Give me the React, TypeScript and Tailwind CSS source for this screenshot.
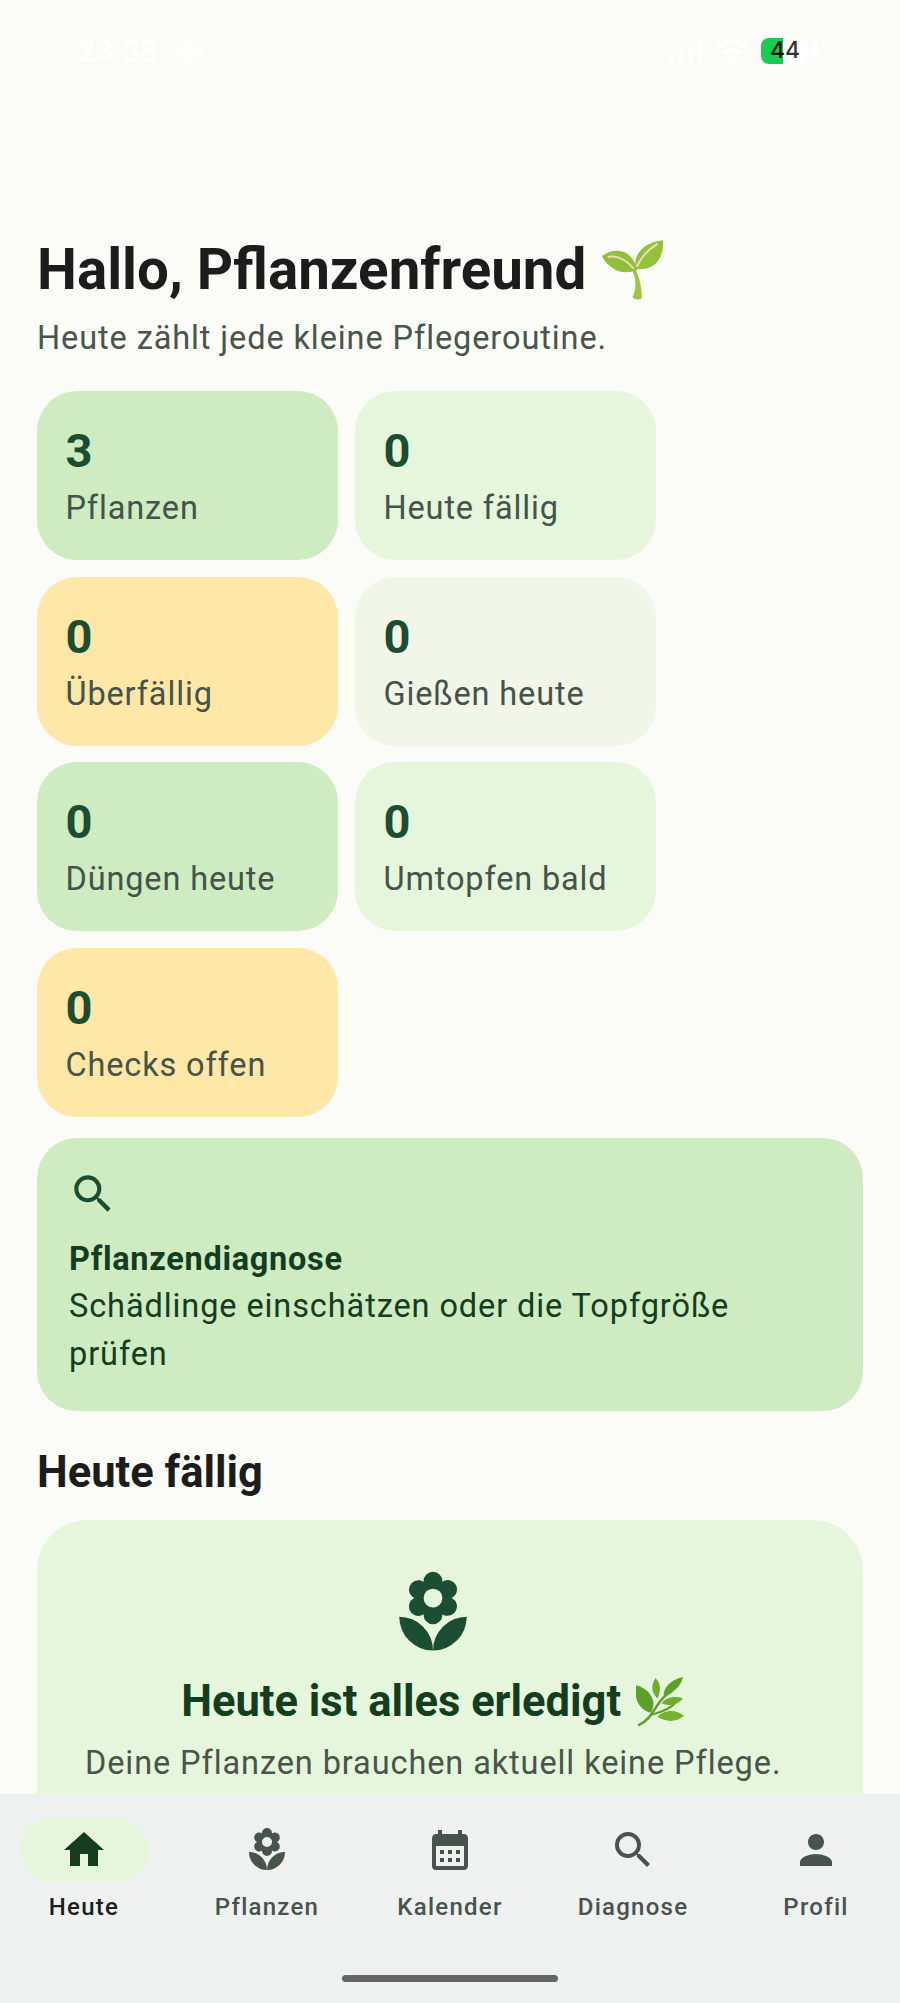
import React from "react";
import { MdCalendarMonth, MdHome, MdLocalFlorist, MdPerson, MdSearch } from "react-icons/md";

function Seedling() {
  return (
    <svg viewBox="0 0 184 180" className="w-[61px] h-[60px] shrink-0" aria-hidden>
      <path d="M98 80 C112 110 120 140 120 172 C120 180 100 182 92 172 C104 150 104 115 90 88 Z" fill="#9CC43C" />
      <path d="M0 48 C25 28 60 26 80 44 C95 57 103 75 106 90 C85 98 62 100 42 90 C22 80 8 66 0 48 Z" fill="#8FC03A" />
      <path d="M184 0 C186 30 178 62 152 78 C135 88 118 90 102 86 C96 62 106 36 128 20 C145 8 165 2 184 0 Z" fill="#92C23C" />
      <path d="M20 50 C48 46 74 60 94 84" stroke="#E8DFAA" strokeWidth="6" fill="none" strokeLinecap="round" />
      <path d="M166 12 C140 28 118 52 106 78" stroke="#E8DFAA" strokeWidth="6" fill="none" strokeLinecap="round" />
    </svg>
  );
}

function Herb() {
  return (
    <svg viewBox="12 6 49 50" className="w-[50px] h-[51px] shrink-0" aria-hidden>
      <path d="M16 54 C24 50 28 44 33 36 C38 28 42 24 48 21" stroke="#5F9E28" strokeWidth="2.5" fill="none" strokeLinecap="round" />
      <path d="M28 44 C36 42 46 39 52 32" stroke="#5F9E28" strokeWidth="2" fill="none" />
      <path d="M13 15 C22 17 29 24 30 32 C30 37 29 40 27 42 C20 40 14 34 13 26 Z" fill="#5BA125" />
      <path d="M32 8 C37 13 38 20 34 28 C30 24 26 18 32 8 Z" fill="#6EAD2B" />
      <path d="M59 7 C57 16 50 23 40 25 C40 17 47 10 59 7 Z" fill="#5BA125" />
      <path d="M59 28 C54 34 46 36 38 33 C42 27 50 25 59 28 Z" fill="#6EAD2B" />
      <path d="M60 45 C52 52 42 51 34 46 C40 39 52 38 60 45 Z" fill="#74B32F" />
    </svg>
  );
}

function StatusBar() {
  return (
    <div className="h-[100px] shrink-0 flex items-center justify-between pl-[78px] pr-[78px] pt-[1px]">
      <div className="flex items-center gap-[17px] text-white">
        <span className="text-[28px] font-semibold leading-none font-['Inter',sans-serif]">23:38</span>
        <svg viewBox="0 0 28 28" className="w-[28px] h-[28px]" fill="none" stroke="#fff" strokeWidth="2">
          <path d="M14 1 L27 14 L14 27 L1 14 Z" strokeLinejoin="round" />
          <path d="M14 7 L21 14 L14 21 L7 14 Z M14 7 V21 M7 14 H21" strokeWidth="1.4" />
        </svg>
      </div>
      <div className="flex items-center">
        <svg viewBox="0 0 34 26" className="w-[34px] h-[26px] mr-[13px] opacity-80" fill="#fff">
          <rect x="0" y="17" width="5" height="9" rx="2.5" />
          <rect x="9" y="12" width="5" height="14" rx="2.5" />
          <rect x="19" y="6" width="5" height="20" rx="2.5" />
          <rect x="29" y="0" width="5" height="26" rx="2.5" />
        </svg>
        <svg viewBox="0 0 32 26" className="w-[32px] h-[26px] mr-[13px]" fill="none" stroke="#fff" strokeWidth="4" strokeLinecap="round">
          <path d="M2 9 C10 1 22 1 30 9" />
          <path d="M8 15 C12 11 20 11 24 15" />
          <circle cx="16" cy="22" r="2" fill="#fff" />
        </svg>
        <div className="relative w-[47px] h-[26px] rounded-[8px] bg-white overflow-hidden">
          <div className="h-full w-[22px] bg-[#17cc52]" />
          <span className="absolute left-[9px] top-0 h-full flex items-center text-[23px] font-medium leading-none font-['Inter',sans-serif]">
            <span className="text-[#111]">4</span>
            <span className="text-[#333]">4</span>
          </span>
        </div>
        <svg viewBox="0 0 14 24" className="w-[14px] h-[24px]" fill="#fff">
          <path d="M9 0 L0 14 H6 L4 24 L14 9 H8 Z" />
        </svg>
      </div>
    </div>
  );
}

function Stat({ value, label, bg }: { value: string; label: string; bg: string }) {
  return (
    <div className={`${bg} w-[301px] h-[169px] rounded-[40px] px-[28.5px] flex flex-col`}>
      <div className="mt-[29px] text-[47px] leading-[62px] font-bold text-[#1b4d33]">{value}</div>
      <div className="mt-[4px] text-[32.5px] leading-[44px] tracking-[0.85px] text-[#45534a]">{label}</div>
    </div>
  );
}

function NavItem({ icon, label, active }: { icon: React.ReactNode; label: string; active?: boolean }) {
  return (
    <div className="w-[129px] flex flex-col items-center">
      <div className={`w-[129px] h-[64px] rounded-full flex items-center justify-center ${active ? "bg-[#e6f6dc] text-[#143d1f]" : "text-[#47534b]"}`}>
        {icon}
      </div>
      <div className={`mt-[10px] text-[24px] leading-[30px] font-medium tracking-[1.25px] whitespace-nowrap ${active ? "text-[#1a1f1b]" : "text-[#47534b]"}`}>
        {label}
      </div>
    </div>
  );
}

export default function App() {
  return (
    <div className="w-[900px] h-[2003px] bg-[#fbfcf8] flex flex-col overflow-hidden font-['Roboto',sans-serif]">
      <StatusBar />
      <main className="flex-1 min-h-0 overflow-hidden px-[37px]">
        <div className="mt-[136px] flex items-center gap-[16px] h-[68px]">
          <h1 className="text-[56.5px] leading-[68px] font-bold text-[#1c1c1c] whitespace-nowrap">Hallo, Pflanzenfreund</h1>
          <Seedling />
        </div>
        <p className="mt-[12px] text-[32.5px] leading-[44px] tracking-[0.9px] text-[#49544b]">Heute zählt jede kleine Pflegeroutine.</p>
        <div className="mt-[31px] grid grid-cols-[301px_301px] gap-x-[17px] gap-y-[16.5px]">
          <Stat value="3" label="Pflanzen" bg="bg-[#cfebc2]" />
          <Stat value="0" label="Heute fällig" bg="bg-[#e6f6dc]" />
          <Stat value="0" label="Überfällig" bg="bg-[#ffe7a8]" />
          <Stat value="0" label="Gießen heute" bg="bg-[#f1f6e9]" />
          <Stat value="0" label="Düngen heute" bg="bg-[#cfebc2]" />
          <Stat value="0" label="Umtopfen bald" bg="bg-[#e6f6dc]" />
          <Stat value="0" label="Checks offen" bg="bg-[#ffe7a8]" />
        </div>
        <section className="mt-[21px] h-[273px] rounded-[40px] bg-[#cfebc2] pl-[32px] pr-[60px] pt-[31px]">
          <MdSearch className="block w-[50px] h-[50px] -ml-[1px] text-[#1b4d33]" />
          <div className="mt-[18px] text-[32.5px] leading-[44px] font-bold tracking-[0.7px] text-[#143d1f]">Pflanzendiagnose</div>
          <p className="mt-[1px] text-[32.5px] leading-[48.5px] tracking-[0.9px] text-[#143d1f]">Schädlinge einschätzen oder die Topfgröße prüfen</p>
        </section>
        <h2 className="mt-[34px] text-[43.5px] leading-[56px] font-bold text-[#1c1c1c]">Heute fällig</h2>
        <section className="mt-[19px] h-[400px] rounded-[50px] bg-[#e6f6dc] pl-[48px] pt-[48px]">
          <div className="w-fit flex flex-col items-center">
            <MdLocalFlorist className="block w-[90px] h-[90px] text-[#1b4d33]" />
            <div className="mt-[14px] flex items-center gap-[14px] h-[60px]">
              <span className="text-[43.5px] leading-[60px] font-bold text-[#143d1f] whitespace-nowrap">Heute ist alles erledigt</span>
              <Herb />
            </div>
            <p className="mt-[9px] text-[32.5px] leading-[44px] tracking-[0.9px] text-[#49544b] whitespace-nowrap">Deine Pflanzen brauchen aktuell keine Pflege.</p>
          </div>
        </section>
      </main>
      <nav className="h-[209px] shrink-0 bg-[#eff1f0] relative pt-[24px]">
        <div className="flex justify-between px-[19.5px]">
          <NavItem active label="Heute" icon={<MdHome className="block w-[48px] h-[48px]" />} />
          <NavItem label="Pflanzen" icon={<MdLocalFlorist className="block w-[48px] h-[48px]" />} />
          <NavItem label="Kalender" icon={<MdCalendarMonth className="block w-[48px] h-[48px]" />} />
          <NavItem label="Diagnose" icon={<MdSearch className="block w-[48px] h-[48px]" />} />
          <NavItem label="Profil" icon={<MdPerson className="block w-[48px] h-[48px]" />} />
        </div>
        <div className="absolute left-[342px] top-[181px] w-[216px] h-[7px] rounded-full bg-[#666666]" />
      </nav>
    </div>
  );
}
